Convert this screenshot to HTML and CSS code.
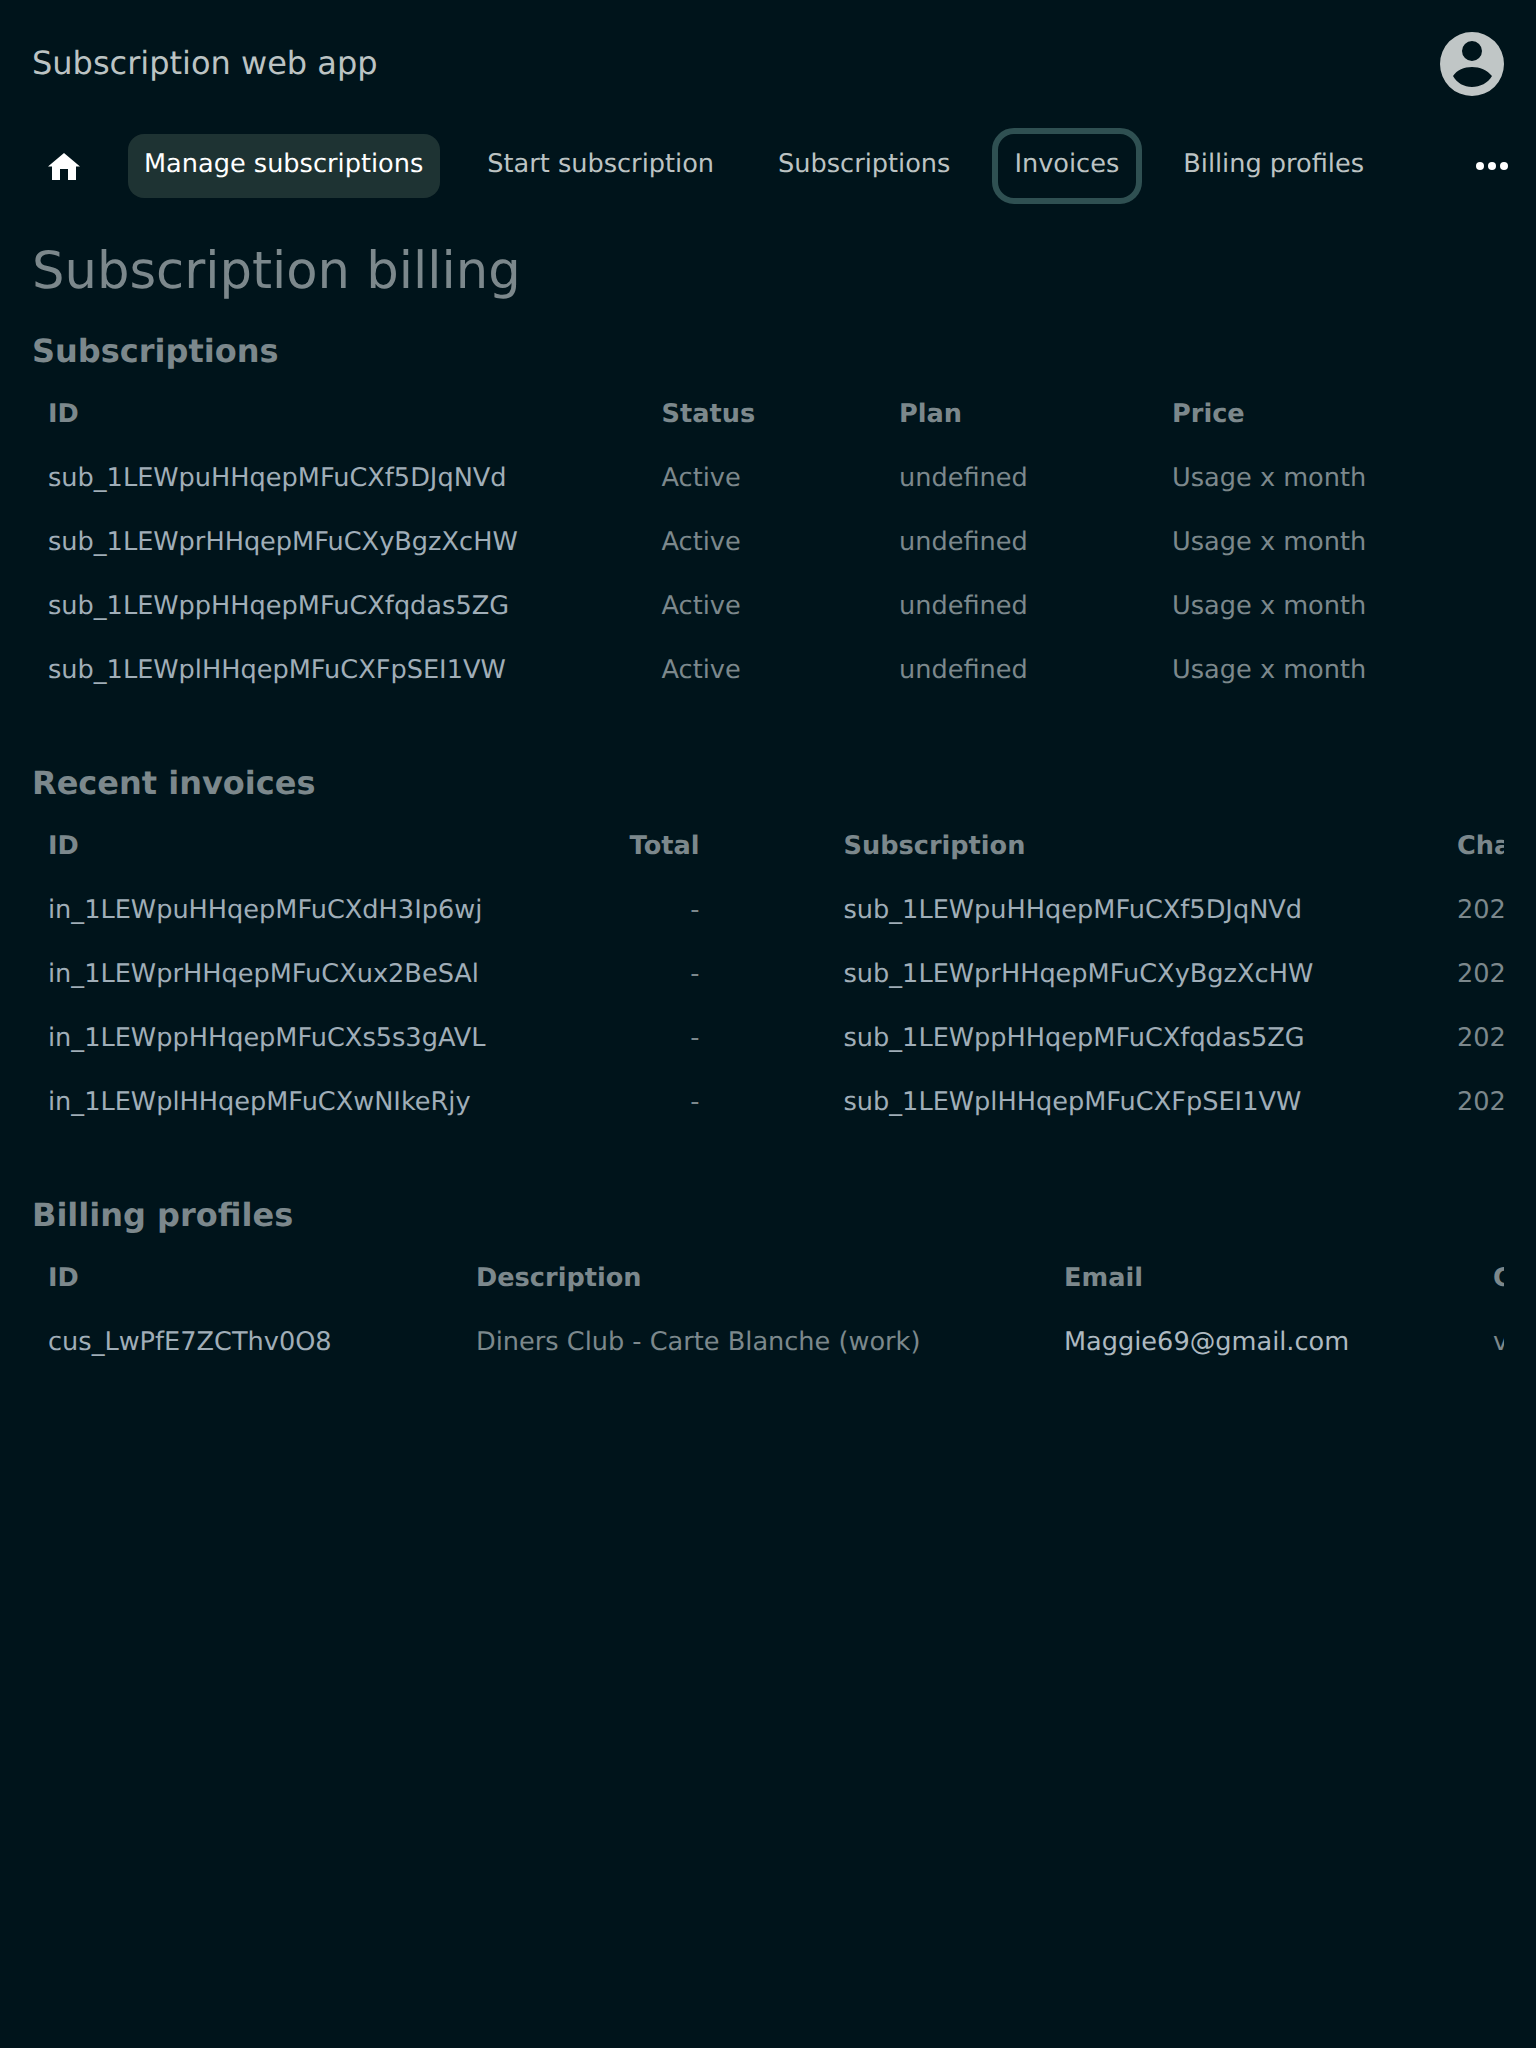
FILE: index.html
```html
<!DOCTYPE html>
<html lang="en">
<head>
  <meta charset="UTF-8">
  <title>Subscription web app</title>
  <link rel="stylesheet" href="styles.css">
</head>
<body>

  <header class="topbar">
    <span class="app-title">Subscription web app</span>
    <svg class="avatar" viewBox="0 0 64 64">
      <path fill-rule="evenodd" d="M32 0a32 32 0 1 0 0 64a32 32 0 1 0 0-64zM32 9a10 10 0 1 1 0 20a10 10 0 1 1 0-20zM13 44C17 38 24 35 32 35C40 35 47 38 52 44C48 51 40 55 32 55C24 55 17 51 13 44z"/>
    </svg>
  </header>

  <nav class="nav">
    <a class="nav-icon">
      <svg class="home" viewBox="0 0 32 28"><path d="M16 1L32 14.500H28V28H20V17H12V28H4V14.500H0z"/></svg>
    </a>
    <a class="nav-item active">Manage subscriptions</a>
    <a class="nav-item">Start subscription</a>
    <a class="nav-item">Subscriptions</a>
    <a class="nav-item focused">Invoices</a>
    <a class="nav-item">Billing profiles</a>
    <a class="nav-icon more">
      <svg class="dots" viewBox="0 0 32 8"><circle cx="4" cy="4" r="4"/><circle cx="16" cy="4" r="4"/><circle cx="28" cy="4" r="4"/></svg>
    </a>
  </nav>

  <main class="content">
    <h1>Subscription billing</h1>

    <section class="block">
      <h2>Subscriptions</h2>
      <div class="table-wrap">
        <table class="subs">
          <colgroup><col class="c1"><col class="c2"><col class="c3"><col class="c4"></colgroup>
          <thead><tr><th>ID</th><th>Status</th><th>Plan</th><th>Price</th></tr></thead>
          <tbody>
            <tr><td class="id">sub_1LEWpuHHqepMFuCXf5DJqNVd</td><td>Active</td><td>undefined</td><td>Usage x month</td></tr>
            <tr><td class="id">sub_1LEWprHHqepMFuCXyBgzXcHW</td><td>Active</td><td>undefined</td><td>Usage x month</td></tr>
            <tr><td class="id">sub_1LEWppHHqepMFuCXfqdas5ZG</td><td>Active</td><td>undefined</td><td>Usage x month</td></tr>
            <tr><td class="id">sub_1LEWplHHqepMFuCXFpSEI1VW</td><td>Active</td><td>undefined</td><td>Usage x month</td></tr>
          </tbody>
        </table>
      </div>
    </section>

    <section class="block">
      <h2>Recent invoices</h2>
      <div class="table-wrap">
        <table class="invoices">
          <colgroup><col class="c1"><col class="c2"><col class="c3"><col class="c4"></colgroup>
          <thead><tr><th>ID</th><th class="num">Total</th><th class="sub-ref">Subscription</th><th>Charged</th></tr></thead>
          <tbody>
            <tr><td class="id">in_1LEWpuHHqepMFuCXdH3Ip6wj</td><td class="num">-</td><td class="id sub-ref">sub_1LEWpuHHqepMFuCXf5DJqNVd</td><td>2022</td></tr>
            <tr><td class="id">in_1LEWprHHqepMFuCXux2BeSAl</td><td class="num">-</td><td class="id sub-ref">sub_1LEWprHHqepMFuCXyBgzXcHW</td><td>2022</td></tr>
            <tr><td class="id">in_1LEWppHHqepMFuCXs5s3gAVL</td><td class="num">-</td><td class="id sub-ref">sub_1LEWppHHqepMFuCXfqdas5ZG</td><td>2022</td></tr>
            <tr><td class="id">in_1LEWplHHqepMFuCXwNIkeRjy</td><td class="num">-</td><td class="id sub-ref">sub_1LEWplHHqepMFuCXFpSEI1VW</td><td>2022</td></tr>
          </tbody>
        </table>
      </div>
    </section>

    <section class="block">
      <h2>Billing profiles</h2>
      <div class="table-wrap">
        <table class="profiles">
          <colgroup><col class="c1"><col class="c2"><col class="c3"><col class="c4"></colgroup>
          <thead><tr><th>ID</th><th>Description</th><th>Email</th><th>Currency</th></tr></thead>
          <tbody>
            <tr><td class="id">cus_LwPfE7ZCThv0O8</td><td>Diners Club - Carte Blanche (work)</td><td class="email">Maggie69@gmail.com</td><td>visa</td></tr>
          </tbody>
        </table>
      </div>
    </section>
  </main>

</body>
</html>
```

FILE: styles.css
```css
body { margin: 0; background: #00141b; font-family: "DejaVu Sans", sans-serif; font-size: 25.6px; color: #7c888c; text-rendering: geometricPrecision; }

.topbar { display: flex; justify-content: space-between; align-items: center; padding: 32px 32px 0; }
.app-title { font-size: 32px; color: #bcc3c3; padding-bottom: 2px; }
.avatar { width: 64px; height: 64px; fill: #c0c6c6; display: block; }

.nav { display: flex; align-items: center; gap: 32px; padding: 38px 12px 0 32px; height: 64px; }
.nav-item { padding: 0 16px; height: 64px; line-height: 61px; color: #bcc3c3; border-radius: 16px; white-space: nowrap; }
.nav-item.active { background: #1e3333; color: #fff; padding-right: 17px; margin-right: -1px; }
.nav-item.focused { outline: 6px solid #2f5052; padding-right: 17px; margin-right: -1px; }
.nav-icon { width: 64px; height: 64px; display: flex; align-items: center; justify-content: center; }
.nav-icon.more { margin-left: auto; }
.home { width: 32px; height: 28px; fill: #fff; }
.dots { width: 32px; height: 8px; fill: #fff; }

.content { padding: 0 32px; }
h1 { font-size: 51.2px; font-weight: 400; line-height: 64px; margin: 41px 0 -1px; color: #7c888c; }
h2 { font-size: 32px; font-weight: 700; line-height: 40px; margin: 0; color: #7c888c; }
.block { height: 432px; }
h1 + .block { padding-top: 29px; }

.table-wrap { overflow: hidden; margin-top: 11px; }
table { border-collapse: collapse; table-layout: fixed; }
th, td { padding: 0 16px; height: 64px; text-align: left; white-space: nowrap; overflow: hidden; }
th { font-weight: 700; }
.num { text-align: right; }
.id { color: #a0aeb8; }
.email { color: #aeb9c0; }
.sub-ref { padding-left: 128px; }

.subs { width: 1472px; }
.subs .c1 { width: 613.5px; }
.subs .c2 { width: 237.5px; }
.subs .c3 { width: 273px; }
.subs .c4 { width: 348px; }

.invoices { width: 1650px; }
.invoices .c1 { width: 523px; }
.invoices .c2 { width: 160.5px; }
.invoices .c3 { width: 725.5px; }
.invoices .c4 { width: 241px; }

.profiles { width: 1700px; }
.profiles .c1 { width: 428px; }
.profiles .c2 { width: 588px; }
.profiles .c3 { width: 429px; }
.profiles .c4 { width: 255px; }
```
